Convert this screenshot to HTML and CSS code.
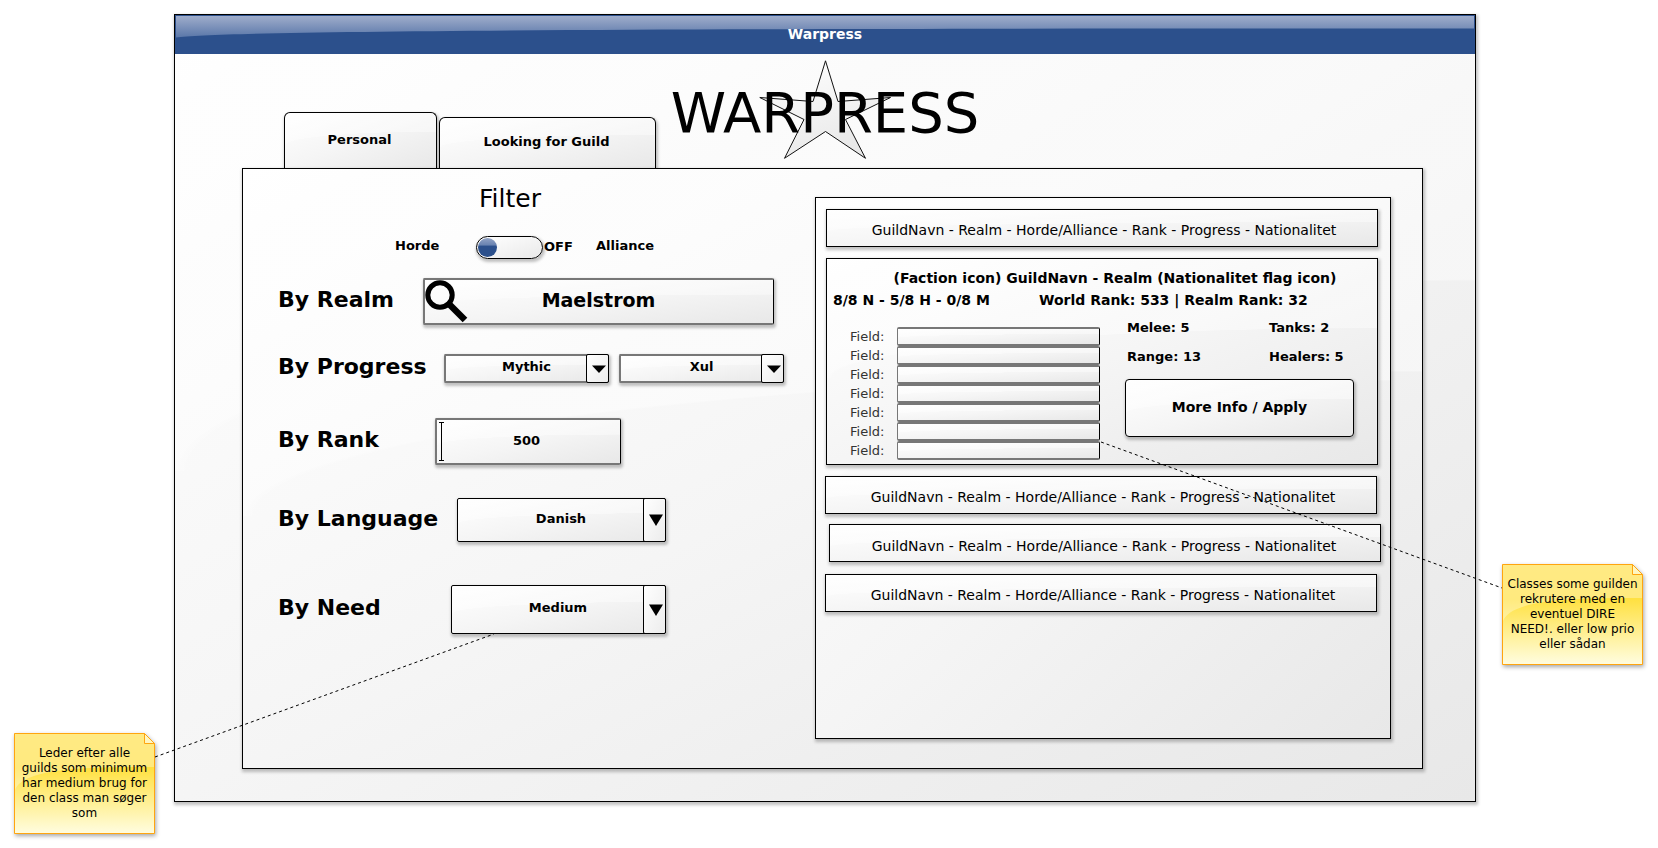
FILE: index.html
```html
<!DOCTYPE html>
<html lang="da">
<head>
<meta charset="utf-8">
<title>Warpress</title>
<link rel="stylesheet" href="styles.css">
</head>
<body>
<div class="board">
  <main class="window surface">
    <div class="titlebar">
      <svg class="titlebar-gloss" viewBox="0 0 1300 22" preserveAspectRatio="none" aria-hidden="true">
        <defs>
          <linearGradient id="barGloss" x1="0" y1="0" x2="0" y2="1">
            <stop offset="0" stop-color="#9fadcb"/>
            <stop offset="1" stop-color="#5a77a9"/>
          </linearGradient>
        </defs>
        <path d="M0 0H1300V12.5C700 12.5 60 13 0 21.5Z" fill="url(#barGloss)"/>
      </svg>
      <span class="titlebar-text">Warpress</span>
    </div>

    <header class="header">
      <nav class="tabs">
        <button class="tab tab-active surface" type="button">Personal</button>
        <button class="tab tab-wide surface" type="button">Looking for Guild</button>
      </nav>
      <div class="brand">
        <svg class="star" viewBox="0 0 132 99" width="132" height="99" aria-hidden="true">
          <defs>
            <linearGradient id="starFill" x1="0" y1="0" x2="0.4" y2="1">
              <stop offset="0" stop-color="#fff"/>
              <stop offset="1" stop-color="#e9e9e9"/>
            </linearGradient>
          </defs>
          <path d="M66.500 .8 79 41.500 131.500 37.500 86.500 59.500 106.500 98.300 66.500 71.500 25.500 98.300 45 59.500 .8 37.500 54 41.500Z" fill="url(#starFill)" stroke="#111" stroke-width="1"/>
        </svg>
        <h1 class="brand-name">WARPRESS</h1>
      </div>
    </header>

    <section class="panel surface">
      <form class="filter">
        <h2 class="filter-title">Filter</h2>
        <div class="faction">
          <label class="faction-horde" for="faction">Horde</label>
          <input class="toggle" type="checkbox" id="faction">
          <span class="faction-state">OFF</span>
          <label class="faction-alliance" for="faction">Alliance</label>
        </div>

        <div class="row row-realm">
          <label class="row-label" for="realm">By Realm</label>
          <div class="field">
            <input class="control surface soft" type="text" id="realm" value="Maelstrom">
            <svg class="magnifier" viewBox="0 0 44 44" width="44" height="44" aria-hidden="true">
              <circle cx="16" cy="16" r="12.2" fill="none" stroke="#000" stroke-width="5"/>
              <path d="M25 25 41 41" stroke="#000" stroke-width="6.5"/>
            </svg>
          </div>
        </div>

        <div class="row row-progress">
          <label class="row-label" for="difficulty">By Progress</label>
          <div class="field select">
            <select class="control surface soft" id="difficulty"><option>Mythic</option></select>
            <svg class="arrow" viewBox="0 0 14 8" width="14" height="8" aria-hidden="true"><path d="M0 .5H14L7 8Z"/></svg>
          </div>
          <div class="field select">
            <select class="control surface soft" id="boss" aria-label="Boss"><option>Xul</option></select>
            <svg class="arrow" viewBox="0 0 14 8" width="14" height="8" aria-hidden="true"><path d="M0 .5H14L7 8Z"/></svg>
          </div>
        </div>

        <div class="row row-rank">
          <label class="row-label" for="rank">By Rank</label>
          <div class="field">
            <input class="control surface soft" type="text" id="rank" value="500">
            <svg class="caret" viewBox="0 0 5 39" width="5" height="39" aria-hidden="true"><path d="M0 .5H5M2.5 .5V38.5M0 38.5H5" stroke="#000" fill="none"/></svg>
          </div>
        </div>

        <div class="row row-language">
          <label class="row-label" for="language">By Language</label>
          <div class="field select">
            <select class="control surface" id="language"><option>Danish</option></select>
            <svg class="arrow" viewBox="0 0 14 12" width="14" height="12" aria-hidden="true"><path d="M0 .5H14L7 12Z"/></svg>
          </div>
        </div>

        <div class="row row-need">
          <label class="row-label" for="need">By Need</label>
          <div class="field select">
            <select class="control surface" id="need"><option>Medium</option></select>
            <svg class="arrow" viewBox="0 0 14 12" width="14" height="12" aria-hidden="true"><path d="M0 .5H14L7 12Z"/></svg>
          </div>
        </div>
      </form>

      <section class="guilds surface">
        <button class="guild guild-first surface" type="button">GuildNavn - Realm - Horde/Alliance - Rank - Progress - Nationalitet</button>

        <article class="card surface">
          <h3 class="card-title">(Faction icon) GuildNavn - Realm (Nationalitet flag icon)</h3>
          <div class="card-ranks">
            <span>8/8 N - 5/8 H - 0/8 M</span>
            <span>World Rank: 533 | Realm Rank: 32</span>
          </div>
          <div class="card-body">
            <div class="needs">
              <label class="need">Field: <input class="need-input surface" type="text"></label>
              <label class="need">Field: <input class="need-input surface" type="text"></label>
              <label class="need">Field: <input class="need-input surface" type="text"></label>
              <label class="need">Field: <input class="need-input surface" type="text"></label>
              <label class="need">Field: <input class="need-input surface" type="text"></label>
              <label class="need">Field: <input class="need-input surface" type="text"></label>
              <label class="need">Field: <input class="need-input surface" type="text"></label>
            </div>
            <div class="summary">
              <div class="stats">
                <span>Melee: 5</span><span>Tanks: 2</span>
                <span>Range: 13</span><span>Healers: 5</span>
              </div>
              <button class="apply surface" type="button">More Info / Apply</button>
            </div>
          </div>
        </article>

        <button class="guild guild-left surface" type="button">GuildNavn - Realm - Horde/Alliance - Rank - Progress - Nationalitet</button>
        <button class="guild guild-right surface" type="button">GuildNavn - Realm - Horde/Alliance - Rank - Progress - Nationalitet</button>
        <button class="guild guild-left guild-last surface" type="button">GuildNavn - Realm - Horde/Alliance - Rank - Progress - Nationalitet</button>
      </section>
    </section>
  </main>

  <svg class="connectors" aria-hidden="true">
    <line x1="155" y1="757" x2="494" y2="634"/>
    <line x1="1101" y1="442" x2="1502" y2="588"/>
  </svg>

  <aside class="note note-need">
    <svg class="note-shape" viewBox="0 0 141 101" width="141" height="101" aria-hidden="true">
      <defs>
        <linearGradient id="noteFill" x1="0" y1="0" x2="0" y2="1">
          <stop offset="0" stop-color="#ffe14a"/>
          <stop offset=".35" stop-color="#ffe142"/>
          <stop offset="1" stop-color="#fffde0"/>
        </linearGradient>
      </defs>
      <path d="M.5 .5H130.5L140.5 10.5V100.5H.5Z" fill="url(#noteFill)"/>
      <path d="M1 1H130L140 11V34C80 34 10 34 1 57Z" fill="#fff" opacity=".32"/>
      <path d="M130.5 .5V10.5H140.5Z" fill="#fff6c0"/>
      <path d="M.5 .5H130.5L140.5 10.5V100.5H.5ZM130.5 .5V10.5H140.5" fill="none" stroke="#ffa50f"/>
    </svg>
    <p class="note-text">Leder efter alle<br>guilds som minimum<br>har medium brug for<br>den class man søger<br>som</p>
  </aside>

  <aside class="note note-classes">
    <svg class="note-shape" viewBox="0 0 141 101" width="141" height="101" aria-hidden="true">
      <path d="M.5 .5H130.5L140.5 10.5V100.5H.5Z" fill="url(#noteFill)"/>
      <path d="M1 1H130L140 11V34C80 34 10 34 1 57Z" fill="#fff" opacity=".32"/>
      <path d="M130.5 .5V10.5H140.5Z" fill="#fff6c0"/>
      <path d="M.5 .5H130.5L140.5 10.5V100.5H.5ZM130.5 .5V10.5H140.5" fill="none" stroke="#ffa50f"/>
    </svg>
    <p class="note-text">Classes some guilden<br>rekrutere med en<br>eventuel DIRE<br>NEED!. eller low prio<br>eller sådan</p>
  </aside>
</div>
</body>
</html>
```

FILE: styles.css
```css
* {
  box-sizing: border-box;
}

body {
  margin: 0;
  background: #fff;
  color: #000;
  font: bold 13px/20px "DejaVu Sans", sans-serif;
}

button,
input,
select {
  margin: 0;
  color: inherit;
  font: inherit;
  border-radius: 0;
}

.board {
  position: relative;
  padding: 14px 182px 46px 174px;
}

/* Glossy grey surface: a curved highlight over a diagonal gradient */
.surface {
  border: 1px solid #000;
  background:
    radial-gradient(ellipse 100% 42% at 100% 100%, transparent 99%, rgba(255, 255, 255, 0.4) 100%) top / 100% 58% no-repeat,
    linear-gradient(to bottom right, #fff, #f5f5f5 50%, #e8e8e8);
  box-shadow: 1px 2px 3px 1px rgba(0, 0, 0, 0.24);
}

.titlebar {
  position: relative;
  height: 39px;
  padding-top: 9px;
  color: #fff;
  font-size: 14px;
  text-align: center;
  background: #2c508c;
}

.titlebar-gloss {
  position: absolute;
  top: 1px;
  left: 1px;
  width: calc(100% - 2px);
  height: 22px;
}

.titlebar-text {
  position: relative;
}

.header {
  display: grid;
  grid-template-columns: 1fr auto 1fr;
  height: 114px;
}

.tabs {
  display: flex;
  align-items: flex-end;
  gap: 2px;
  width: 0;
  padding-left: 109px;
}

.tab {
  flex: none;
  width: 153px;
  height: 56px;
  padding: 0 2px 2px 0;
  border-bottom: 0;
  border-radius: 6px 6px 0 0;
}

.tab-wide {
  width: 217px;
  height: 51px;
}

.brand {
  position: relative;
}

.star {
  position: absolute;
  top: 6px;
  left: 50%;
  margin-left: -66px;
}

.brand-name {
  position: relative;
  margin: 29px 0 0;
  font-size: 56px;
  font-weight: normal;
  line-height: 60px;
}

.panel {
  position: relative;
  display: grid;
  grid-template-columns: 572fr 576fr;
  margin: 0 52px 32px 67px;
  padding: 28px 31px 29px 0;
}

.filter {
  padding-left: 34px;
}

.filter-title {
  margin: -12px 0 0;
  padding-left: 202px;
  font-size: 25px;
  font-weight: normal;
  line-height: 28px;
}

.faction {
  display: flex;
  align-items: flex-start;
  margin-top: 23px;
  padding-left: 118px;
  height: 23px;
}

.faction-horde {
  width: 81px;
}

.faction-state {
  width: 53px;
  padding: 1px 0 0 1px;
}

.toggle {
  appearance: none;
  width: 67px;
  height: 23px;
  padding: 1px;
  border: 1px solid #000;
  border-radius: 12px;
  background: linear-gradient(to bottom right, #fff, #e9e9e9);
  box-shadow: 1px 2px 3px 1px rgba(0, 0, 0, 0.24);
}

.toggle::before {
  content: "";
  display: block;
  width: 19px;
  height: 19px;
  border-radius: 50%;
  background:
    linear-gradient(#93a4c6, #6680af) top / 100% 40% no-repeat,
    #2c508c;
}

.toggle:checked::before {
  margin-left: auto;
}

.row {
  display: flex;
  align-items: center;
}

.row-label {
  padding: 0 0 3px 1px;
  font-size: 22px;
  line-height: 28px;
}

.field {
  position: relative;
  height: 100%;
}

.control {
  display: block;
  appearance: none;
  width: 100%;
  height: 100%;
  padding: 0 1px 3px 0;
  border-radius: 2px;
  text-align: center;
  text-align-last: center;
}

.soft {
  border-width: 2px 1px 2px 2px;
  border-color: #777 #000 #777 #777;
}

.magnifier {
  position: absolute;
  top: 1px;
  left: 1px;
}

.caret {
  position: absolute;
  top: 4px;
  left: 4px;
}

.select::after {
  content: "";
  position: absolute;
  top: 0;
  right: 0;
  bottom: 0;
  width: 21px;
  border: 1px solid #000;
  border-radius: 2px;
  background: linear-gradient(to bottom right, #fff, #ececec);
  pointer-events: none;
}

.arrow {
  position: absolute;
  z-index: 1;
  top: 0;
  right: 3px;
  bottom: 0;
  margin: auto 0;
  pointer-events: none;
}

.row-realm {
  height: 47px;
  margin-top: 19px;
}

.row-realm .row-label {
  width: 146px;
}

.row-realm .field {
  width: 351px;
}

.row-realm .control {
  font-size: 19px;
}

.row-progress {
  height: 29px;
  margin-top: 29px;
}

.row-progress .row-label {
  width: 167px;
}

.row-progress .field {
  width: 165px;
}

.row-progress .field + .field {
  margin-left: 10px;
}

.row-rank {
  height: 47px;
  margin-top: 35px;
}

.row-rank .row-label {
  width: 158px;
}

.row-rank .field {
  width: 186px;
}

.row-rank .control {
  padding-right: 4px;
}

.row-language {
  height: 44px;
  margin-top: 33px;
}

.row-language .row-label {
  width: 180px;
}

.row-language .field {
  width: 209px;
}

.row-need {
  height: 49px;
  margin-top: 43px;
}

.row-need .row-label {
  width: 174px;
}

.row-need .field {
  width: 215px;
}

.guilds {
  display: flex;
  flex-direction: column;
  padding: 11px 9px 126px;
}

.guild {
  height: 38px;
  padding: 3px 0 0 4px;
  font-size: 14px;
  font-weight: normal;
}

.guild-first,
.card {
  margin: 0 3px 11px 1px;
}

.guild-left {
  margin: 0 4px 10px 0;
}

.guild-right {
  margin: 0 0 12px 4px;
  padding: 6px 2px 0 0;
}

.guild-last {
  margin-bottom: 0;
}

.card {
  padding: 9px 6px 4px;
}

.card-title {
  margin: 0;
  padding-left: 26px;
  font-size: 14px;
  text-align: center;
}

.card-ranks {
  display: grid;
  grid-template-columns: 206px 1fr;
  margin-top: 2px;
  font-size: 14px;
}

.card-body {
  display: flex;
  justify-content: space-between;
}

.needs {
  padding: 17px 0 0 17px;
}

.need {
  display: flex;
  align-items: center;
  justify-content: space-between;
  width: 250px;
  height: 19px;
  color: #333;
  font-size: 13px;
  font-weight: normal;
}

.need-input {
  width: 203px;
  height: 19px;
  padding: 0 4px;
  border-width: 2px 1px 2px 1px;
  border-color: #777 #000 #777 #777;
  border-radius: 2px;
  box-shadow: none;
}

.summary {
  padding: 8px 17px 0 0;
}

.stats {
  display: grid;
  grid-template-columns: 142px 1fr;
  row-gap: 9px;
  padding-left: 2px;
}

.apply {
  width: 229px;
  height: 58px;
  margin-top: 12px;
  padding: 0 0 2px;
  border-radius: 4px;
  font-size: 14px;
}

.connectors {
  position: absolute;
  inset: 0;
  width: 100%;
  height: 100%;
  pointer-events: none;
}

.connectors line {
  stroke: #000;
  stroke-dasharray: 3 3;
}

.note {
  position: absolute;
  display: grid;
  place-items: center;
  width: 141px;
  height: 101px;
}

.note-need {
  top: 733px;
  left: 14px;
}

.note-classes {
  top: 564px;
  right: 15px;
}

.note-shape {
  position: absolute;
  top: 0;
  left: 0;
  filter: drop-shadow(1px 2px 2px rgba(0, 0, 0, 0.35));
}

.note-text {
  position: relative;
  margin: 0;
  font-size: 12px;
  font-weight: normal;
  line-height: 15px;
  text-align: center;
  white-space: nowrap;
}
```
